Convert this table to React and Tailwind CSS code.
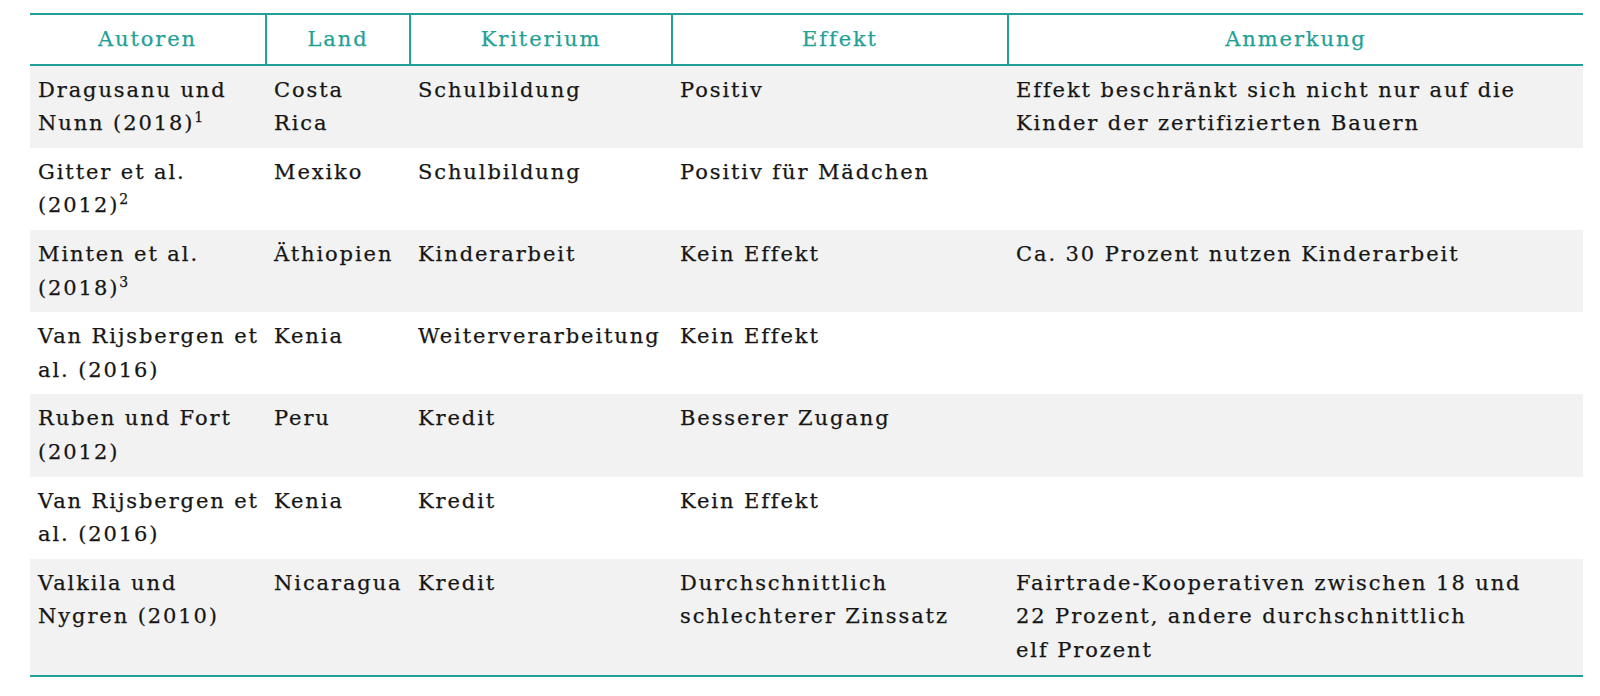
import React from "react";

const Sup = ({ n }) => (
  <sup className="text-[14px] tracking-normal ml-[0px] relative -top-[8px]">{n}</sup>
);

const rows = [
  [["Dragusanu und", <>Nunn (2018)<Sup n="1" /></>], ["Costa", "Rica"], ["Schulbildung"], ["Positiv"], ["Effekt beschränkt sich nicht nur auf die", "Kinder der zertifizierten Bauern"]],
  [["Gitter et al.", <>(2012)<Sup n="2" /></>], ["Mexiko"], ["Schulbildung"], ["Positiv für Mädchen"], []],
  [["Minten et al.", <>(2018)<Sup n="3" /></>], ["Äthiopien"], ["Kinderarbeit"], ["Kein Effekt"], ["Ca. 30 Prozent nutzen Kinderarbeit"]],
  [["Van Rijsbergen et", "al. (2016)"], ["Kenia"], ["Weiterverarbeitung"], ["Kein Effekt"], []],
  [["Ruben und Fort", "(2012)"], ["Peru"], ["Kredit"], ["Besserer Zugang"], []],
  [["Van Rijsbergen et", "al. (2016)"], ["Kenia"], ["Kredit"], ["Kein Effekt"], []],
  [["Valkila und", "Nygren (2010)"], ["Nicaragua"], ["Kredit"], ["Durchschnittlich", "schlechterer Zinssatz"], ["Fairtrade-Kooperativen zwischen 18 und", "22 Prozent, andere durchschnittlich", "elf Prozent"]],
];

const headers = ["Autoren", "Land", "Kriterium", "Effekt", "Anmerkung"];

export default function App() {
  return (
    <div className="bg-white w-[1600px] h-[696px] pt-[13px] pl-[30px]" style={{ fontFamily: '"DejaVu Serif", "Liberation Serif", serif' }}>
      <table className="table-fixed border-collapse w-[1553px] text-[21px] leading-[33.6px] tracking-[1.9px] text-[#161616] [-webkit-text-stroke:0.25px_currentColor]">
        <colgroup>
          <col className="w-[236px]" />
          <col className="w-[144px]" />
          <col className="w-[262px]" />
          <col className="w-[336px]" />
          <col className="w-[575px]" />
        </colgroup>
        <thead>
          <tr className="border-y-2 border-[#1fa196]">
            {headers.map((h, i) => (
              <th
                key={h}
                className={
                  "font-normal text-[#1fa196] text-center pt-[8px] pb-[7px] px-2 " +
                  (i < headers.length - 1 ? "border-r-2 border-[#1fa196]" : "")
                }
              >
                {h}
              </th>
            ))}
          </tr>
        </thead>
        <tbody className="border-b-2 border-[#1fa196]">
          {rows.map((r, ri) => (
            <tr key={ri} className={ri % 2 === 0 ? "bg-[#f2f2f2]" : "bg-white"}>
              {r.map((lines, ci) => (
                <td key={ci} className="align-top text-left pt-[8px] pb-[7px] px-2 whitespace-nowrap">
                  {lines.map((l, li) => (
                    <div key={li}>{l}</div>
                  ))}
                </td>
              ))}
            </tr>
          ))}
        </tbody>
      </table>
    </div>
  );
}
